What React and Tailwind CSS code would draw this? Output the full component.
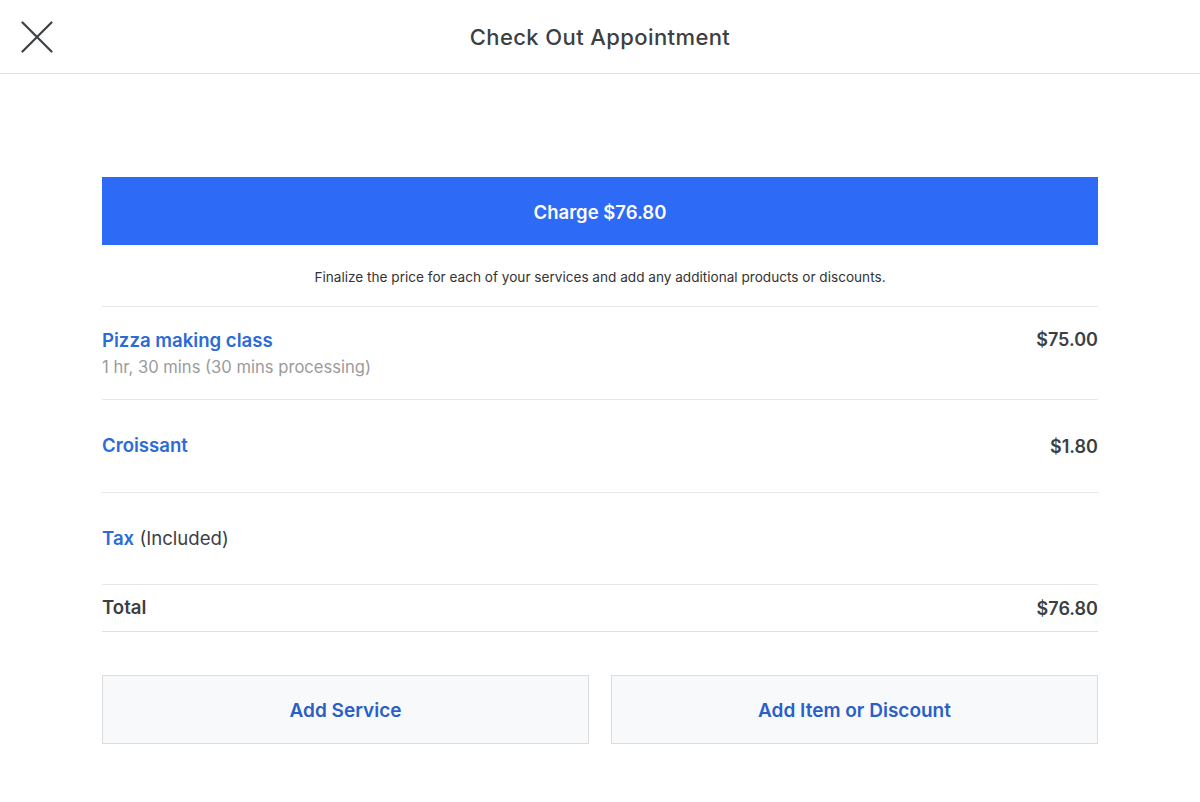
import React from "react";

const lines = [
  { id: 1, name: "Pizza making class", detail: "1 hr, 30 mins (30 mins processing)", price: "$75.00" },
  { id: 2, name: "Croissant", price: "$1.80" },
];

const CloseIcon = () => (
  <svg width="32" height="32" viewBox="0 0 32 32" fill="none">
    <path d="M1.5 1.5L30.5 30.5M30.5 1.5L1.5 30.5" stroke="#3c4043" strokeWidth="2.2" strokeLinecap="round" />
  </svg>
);

const App = () => {
  return (
    <div className="min-h-[802px] bg-white text-[#3b3f44]" style={{ fontFamily: "Inter, 'Noto Sans', sans-serif" }}>
      {/* Header */}
      <header className="h-[74px] border-b border-[#e3e3e3] grid grid-cols-[1fr_auto_1fr] items-center px-[21px]">
        <button className="w-8 h-8 flex items-center justify-center">
          <CloseIcon />
        </button>
        <h1 className="pt-[2px] text-[22px] font-medium tracking-[0.4px] text-[#3c4043]">Check Out Appointment</h1>
        <div />
      </header>

      <main className="px-[102px] pt-[103px]">
        <button className="w-full h-[68px] pt-[3px] bg-[#2d6af6] text-white text-[18.5px] font-semibold">
          Charge $76.80
        </button>
        <p className="mt-[22px] mb-[19px] text-center text-[13.6px] leading-5 text-[#333]">
          Finalize the price for each of your services and add any additional products or discounts.
        </p>

        {/* Line items */}
        <div className="border-t border-[#e6e6e6]">
          {lines.map((line) =>
            line.detail ? (
              <div key={line.id} className="flex justify-between pt-[21px] pb-[21px] border-b border-[#e6e6e6]">
                <div>
                  <p className="text-[18.6px] leading-6 font-semibold text-[#2b6bd7]">{line.name}</p>
                  <p className="mt-1 text-[16.6px] leading-[22px] text-[#9b9b9b]">{line.detail}</p>
                </div>
                <span className="text-[18px] leading-6 font-semibold">{line.price}</span>
              </div>
            ) : (
              <div key={line.id} className="h-[93px] flex items-center justify-between border-b border-[#e6e6e6]">
                <p className="text-[18.6px] font-semibold text-[#2b6bd7]">{line.name}</p>
                <span className="text-[18px] font-semibold">{line.price}</span>
              </div>
            )
          )}
          <div className="h-[92px] flex items-center border-b border-[#e6e6e6]">
            <p className="text-[18.6px]">
              <span className="font-semibold text-[#2b6bd7]">Tax</span>{" "}
              <span className="text-[#3b3f44]">(Included)</span>
            </p>
          </div>
          <div className="h-[47px] flex items-center justify-between border-b border-[#e0e0e0]">
            <span className="text-[18.6px] font-semibold">Total</span>
            <span className="text-[18px] font-semibold">$76.80</span>
          </div>
        </div>

        {/* Actions */}
        <div className="mt-[43px] grid grid-cols-2 gap-[22px]">
          <button className="h-[69px] pt-[4px] bg-[#f8f9fb] border border-[#dcdcdc] text-[19px] font-semibold text-[#2a5fc7]">
            Add Service
          </button>
          <button className="h-[69px] pt-[4px] bg-[#f8f9fb] border border-[#dcdcdc] text-[19px] font-semibold text-[#2a5fc7]">
            Add Item or Discount
          </button>
        </div>
      </main>
    </div>
  );
};

export default App;
